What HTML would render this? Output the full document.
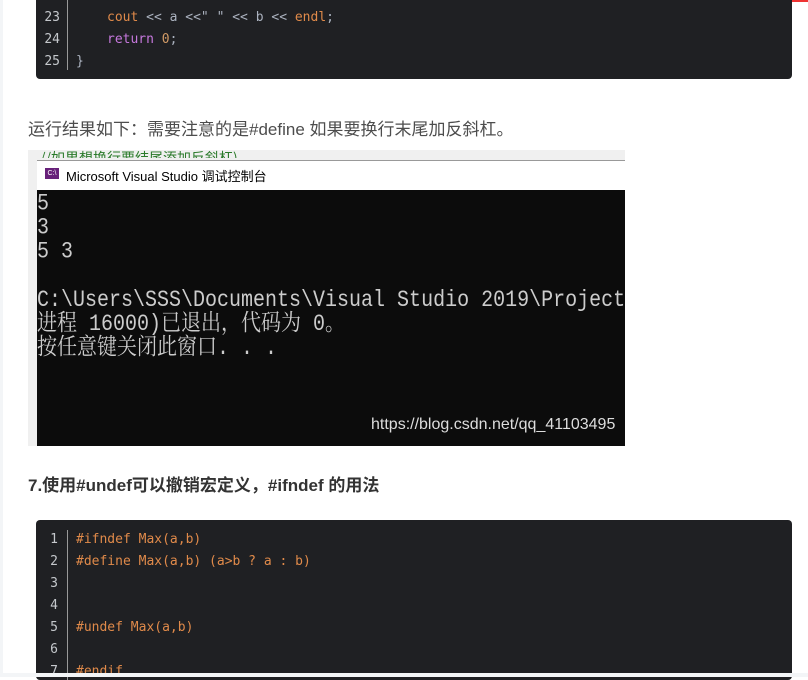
<!DOCTYPE html>
<html><head><meta charset="utf-8"><style>
body{margin:0;width:808px;height:677px;overflow:hidden;background:#fff;font-family:"Liberation Sans","Noto Sans CJK SC",sans-serif;position:relative}
.abs{position:absolute}
.code{position:absolute;left:36px;width:756px;background:#1f2023;border-radius:4px;font-family:"DejaVu Sans Mono","Liberation Mono",monospace;font-size:13px}
.ln{position:absolute;left:0;width:30px;text-align:right;color:#c5c8cc}
.cl{position:absolute;white-space:pre;color:#abb2bf}
.o{color:#e08a4a}.p{color:#c678dd}.b{color:#d19a66}
.div{position:absolute;left:31px;width:1px;background:#999}
.con{font-family:"Liberation Mono","Noto Serif CJK SC",monospace;color:#ccc;font-size:20px;line-height:21px;position:absolute;white-space:pre;transform:scaleY(1.15);transform-origin:0 0}
</style></head><body>
<div class="abs" style="left:0;top:0;width:3px;height:677px;background:#f3f5f7;z-index:5"></div>
<div class="abs" style="left:0;top:673px;width:808px;height:4px;background:#f3f5f7;z-index:5"></div>
<div class="abs" style="left:636px;top:0;width:100px;height:2px;background:#eee"></div>
<div class="abs" style="left:696px;top:0;width:40px;height:2px;background:#ddd"></div>
<div class="abs" style="left:755px;top:0;width:53px;height:2px;background:#e33"></div>

<div class="code" style="top:-6px;height:85px">
 <div class="div" style="top:6px;height:70px"></div>
 <div class="ln" style="top:16px;left:-6px;width:30px">23</div>
 <div class="ln" style="top:38px;left:-6px;width:30px">24</div>
 <div class="ln" style="top:60px;left:-6px;width:30px">25</div>
 <div class="cl" style="left:71px;top:16px"><span class="o">cout</span> &lt;&lt; a &lt;&lt;" " &lt;&lt; b &lt;&lt; <span class="o">endl</span>;</div>
 <div class="cl" style="left:71px;top:38px"><span class="p">return</span> <span class="b">0</span>;</div>
 <div class="cl" style="left:40px;top:60px">}</div>
</div>

<div class="abs" style="left:28px;top:115px;font-size:17px;color:#4d4d4d">运行结果如下：需要注意的是#define 如果要换行末尾加反斜杠。</div>

<div class="abs" style="left:28px;top:150px;width:597px;height:296px;background:#f0f0f0"></div>
<div class="abs" style="left:40px;top:148px;font-size:14px;color:#2a7a2a;font-family:'Noto Sans CJK SC',sans-serif;height:10px;overflow:hidden">//如果想换行要结尾添加反斜杠)</div>
<div class="abs" style="left:37px;top:160px;width:588px;height:30px;background:#fff;border-top:1px solid #999"></div>
<div class="abs" style="left:45px;top:168px;width:14px;height:11px;background:#68217a;color:#fff;font-size:7px;line-height:11px;text-align:center">C:\</div>
<div class="abs" style="left:66px;top:166px;font-size:13px;color:#000">Microsoft Visual Studio 调试控制台</div>
<div class="abs" style="left:37px;top:190px;width:588px;height:256px;background:#0c0c0c;overflow:hidden">
 <div class="con" style="left:0;top:2px">5
3
5 3

C:\Users\SSS\Documents\Visual Studio 2019\Projects
进程 16000)已退出，代码为 0。
按任意键关闭此窗口. . .</div>
 <div class="abs" style="left:334px;top:226px;font-size:16px;color:#ddd">https://blog.csdn.net/qq_41103495</div>
</div>

<div class="abs" style="left:28px;top:471px;font-size:17px;font-weight:bold;color:#333">7.使用#undef可以撤销宏定义，#ifndef 的用法</div>

<div class="code" style="top:520px;height:160px">
 <div class="div" style="top:10px;height:150px"></div>
 <div class="ln" style="top:12px;left:-8px">1</div>
 <div class="ln" style="top:34px;left:-8px">2</div>
 <div class="ln" style="top:56px;left:-8px">3</div>
 <div class="ln" style="top:78px;left:-8px">4</div>
 <div class="ln" style="top:100px;left:-8px">5</div>
 <div class="ln" style="top:122px;left:-8px">6</div>
 <div class="ln" style="top:144px;left:-8px">7</div>
 <div class="cl o" style="left:40px;top:12px">#ifndef Max(a,b)</div>
 <div class="cl o" style="left:40px;top:34px">#define Max(a,b) (a&gt;b ? a : b)</div>
 <div class="cl o" style="left:40px;top:100px">#undef Max(a,b)</div>
 <div class="cl o" style="left:40px;top:144px">#endif</div>
</div>
</body></html>
